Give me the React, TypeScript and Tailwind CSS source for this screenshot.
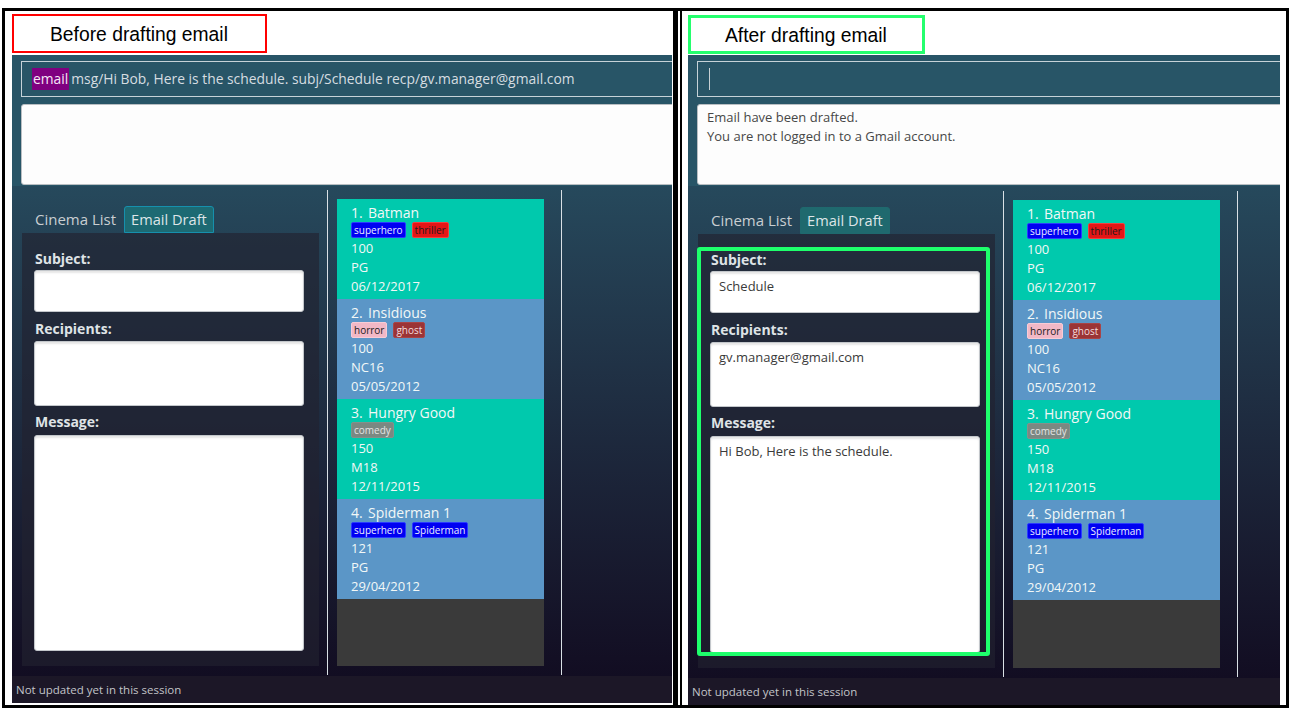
const SANS = "font-['Open_Sans',sans-serif]";

type Movie = {
  n: number;
  name: string;
  tags: { label: string; cls: string }[];
  seats: string;
  rating: string;
  date: string;
  bg: string;
};

const movies: Movie[] = [
  {
    n: 1,
    name: "Batman",
    tags: [
      { label: "superhero", cls: "bg-[#0000f2] text-[#eef] border-[#2a3cff]" },
      { label: "thriller", cls: "bg-[#e41616] text-[#1c1c1c] border-[#f04040]" },
    ],
    seats: "100",
    rating: "PG",
    date: "06/12/2017",
    bg: "bg-[#00c9ad]",
  },
  {
    n: 2,
    name: "Insidious",
    tags: [
      { label: "horror", cls: "bg-[#f2b8c6] text-[#1c1c1c] border-[#f8ccd6]" },
      { label: "ghost", cls: "bg-[#9b3436] text-[#f3dede] border-[#a84446]" },
    ],
    seats: "100",
    rating: "NC16",
    date: "05/05/2012",
    bg: "bg-[#5b96c7]",
  },
  {
    n: 3,
    name: "Hungry Good",
    tags: [{ label: "comedy", cls: "bg-[#7b8882] text-[#e4e4e4] border-[#84918b]" }],
    seats: "150",
    rating: "M18",
    date: "12/11/2015",
    bg: "bg-[#00c9ad]",
  },
  {
    n: 4,
    name: "Spiderman 1",
    tags: [
      { label: "superhero", cls: "bg-[#0000f2] text-[#eef] border-[#2a3cff]" },
      { label: "Spiderman", cls: "bg-[#0000f2] text-[#eef] border-[#2a3cff]" },
    ],
    seats: "121",
    rating: "PG",
    date: "29/04/2012",
    bg: "bg-[#5b96c7]",
  },
];

function MovieCard({ m }: { m: Movie }) {
  return (
    <div className={`h-[100px] pt-[4px] pl-[14px] text-[#f2f8f7] ${m.bg}`}>
      <div className="h-[19px] leading-[19px] text-[14px] flex">
        <span className="w-[17px]">{m.n}.</span>
        <span>{m.name}</span>
      </div>
      <div className="h-[17px] flex items-start gap-[6px]">
        {m.tags.map((t) => (
          <span
            key={t.label}
            className={`h-[16px] px-[2px] rounded-[2px] border text-[10px] leading-[14px] ${t.cls}`}
          >
            {t.label}
          </span>
        ))}
      </div>
      <div className="text-[13px] leading-[19px]">
        <div>{m.seats}</div>
        <div>{m.rating}</div>
        <div>{m.date}</div>
      </div>
    </div>
  );
}

function Field({ h, text }: { h: string; text?: string }) {
  return (
    <div
      className={`${h} bg-white rounded-[3px] border border-[#c3c7cb] shadow-[inset_0_2px_2px_rgba(0,0,0,0.10)] pl-[8px] pt-[4px] text-[13px] leading-[20px] text-[#3a3a3a]`}
    >
      {text}
    </div>
  );
}

function AppWindow({ after }: { after: boolean }) {
  return (
    <div className={`relative overflow-hidden ${after ? "w-[592px] h-[650px]" : "w-[660px] h-[648px]"}`}>
      <div className={`w-[900px] h-full flex flex-col ${SANS}`}>
        {/* command box */}
        <div className="bg-[#285567] pt-[6px] pb-[7px] pl-[9px]">
          <div className="h-[36px] border border-[#c6d2d8] flex items-center pl-[10px] text-[13.85px] text-[#d6dde1] whitespace-nowrap">
            {after ? (
              <span className="w-[1px] h-[22px] bg-[#c8d0d4] ml-[1px]" />
            ) : (
              <>
                <span className="bg-[#800080] text-[#f6e6f6] h-[22px] leading-[22px] px-[1px]">email</span>
                <span className="ml-[2px]">
                  msg/Hi Bob, Here is the schedule. subj/Schedule recp/gv.manager@gmail.com
                </span>
              </>
            )}
          </div>
        </div>
        {/* result box */}
        <div className="bg-[#285567] pl-[9px] pb-[1px]">
          <div className="h-[81px] bg-[#fdfdfd] rounded-[3px] border border-[#b9bec2] pt-[3px] pl-[9px] text-[13px] leading-[19px] text-[#474747]">
            {after && (
              <>
                <div>Email have been drafted.</div>
                <div>You are not logged in to a Gmail account.</div>
              </>
            )}
          </div>
        </div>
        {/* main split area */}
        <div className={`flex-1 flex bg-gradient-to-b from-[#26495c] to-[#120d22] ${after ? "pt-[1px]" : ""}`}>
          <div className="w-[315px] pl-[10px] pr-[8px] pt-[20px] pb-[10px] flex flex-col">
            <div className="h-[27px] flex items-end">
              <div className="h-[27px] pl-[13px] pr-[8px] leading-[27px] text-[15px] text-[#c9ced2]">Cinema List</div>
              <div
                className={`h-[27px] px-[6px] leading-[25px] text-[14.6px] text-[#dde5e8] rounded-t-[3px] border ${
                  after ? "bg-[#1f696e] border-[#1f696e]" : "bg-[#1d6a73] border-[#1690ad]"
                }`}
              >
                Email Draft
              </div>
            </div>
            <div className="flex-1 bg-[#222230]/65 pt-[15px] pl-[12px] pr-[15px] pb-[15px] flex flex-col">
              <div className="h-[22px] pt-[1px] leading-[20px] text-[14px] font-bold text-[#dfe3e6] pl-[1px]">Subject:</div>
              <Field h="h-[42px]" text={after ? "Schedule" : undefined} />
              <div className="h-[29px] pt-[7px] leading-[20px] text-[14px] font-bold text-[#dfe3e6] pl-[1px]">Recipients:</div>
              <Field h="h-[65px]" text={after ? "gv.manager@gmail.com" : undefined} />
              <div className="h-[29px] pt-[6px] leading-[20px] text-[14px] font-bold text-[#dfe3e6] pl-[1px]">Message:</div>
              <div className="flex-1 flex flex-col">
                <Field h="flex-1" text={after ? "Hi Bob, Here is the schedule." : undefined} />
              </div>
            </div>
          </div>
          <div className="w-[1px] bg-[#d9e0e5] mt-[4px] mb-[1px]" />
          <div className="w-[233px] pl-[9px] pt-[13px] pb-[10px] flex flex-col">
            <div className="w-[207px] flex-1 bg-[#3a3a3a] flex flex-col">
              {movies.map((m) => (
                <MovieCard key={m.n} m={m} />
              ))}
            </div>
          </div>
          <div className="w-[1px] bg-[#d9e0e5] mt-[4px] mb-[1px]" />
          <div className="flex-1" />
        </div>
        {/* status bar */}
        <div className="h-[27px] bg-[#1c1727] pl-[4px] leading-[27px] text-[11.5px] text-[#c2c4c8]">
          Not updated yet in this session
        </div>
      </div>
      {after && (
        <div className="absolute left-[9px] top-[192px] w-[293px] h-[409px] border-[4px] border-[#1eff6c] rounded-[3px]" />
      )}
    </div>
  );
}

export default function App() {
  return (
    <div className="w-[1299px] h-[717px] bg-white pt-[8px] pl-[2px]">
      <div className="w-[1287px] h-[700px] border-[3px] border-black flex">
        <div className="w-[668px] pl-[7px] pt-[3px] flex flex-col">
          <div className="w-[255px] h-[39px] border-2 border-[#ff0000] flex items-center pt-[3px] pl-[36px] text-[19.3px] text-black font-['Liberation_Sans',Arial,sans-serif]">
            Before drafting email
          </div>
          <div className="mt-[2px]">
            <AppWindow after={false} />
          </div>
        </div>
        <div className="w-[5px] bg-black" />
        <div className="w-[2px] bg-white" />
        <div className="w-[2px] bg-black" />
        <div className="w-[604px] pl-[6px] pt-[4px] flex flex-col">
          <div className="w-[237px] h-[39px] border-[3px] border-[#24ff6e] flex items-center pt-[3px] pl-[34px] text-[19.3px] text-black font-['Liberation_Sans',Arial,sans-serif]">
            After drafting email
          </div>
          <div className="mt-[1px]">
            <AppWindow after={true} />
          </div>
        </div>
      </div>
    </div>
  );
}
